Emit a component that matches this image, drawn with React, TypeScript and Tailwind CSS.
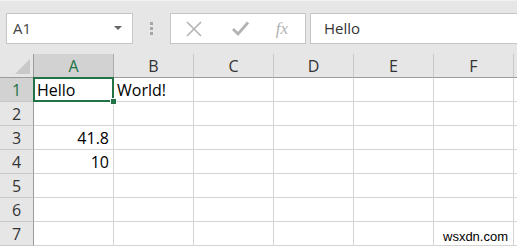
import React from 'react';

const cols = ['A', 'B', 'C', 'D', 'E', 'F', ''];
const rows = [1, 2, 3, 4, 5, 6, 7];

const cells: Record<string, { text: string; align?: 'left' | 'right' }> = {
  A1: { text: 'Hello' },
  B1: { text: 'World!' },
  A3: { text: '41.8', align: 'right' },
  A4: { text: '10', align: 'right' },
};

function Toolbar() {
  return (
    <div className="h-[54px] bg-[#e6e6e6] border-t border-[#f2f2f2] flex items-start pt-[12px] pl-[6px]">
      <div className="w-[127px] h-[31px] bg-white border border-[#c6c6c6] flex items-center justify-between pl-[6px] pr-[10px]">
        <span className="text-[15px] text-[#444]">A1</span>
        <svg width="8" height="5" viewBox="0 0 8 5">
          <path d="M0 0 L8 0 L4 4 Z" fill="#666" />
        </svg>
      </div>
      <div className="w-[37px] h-[31px] flex flex-col items-center justify-center gap-[2px]">
        <span className="w-[3px] h-[3px] bg-[#a6a6a6]" />
        <span className="w-[3px] h-[3px] bg-[#a6a6a6]" />
        <span className="w-[3px] h-[3px] bg-[#a6a6a6]" />
      </div>
      <div className="w-[136px] h-[31px] bg-white border border-[#c6c6c6] flex items-center">
        <div className="w-[46px] flex justify-center">
          <svg width="16" height="16" viewBox="0 0 16 16">
            <path d="M1 1 L15 15 M15 1 L1 15" stroke="#b3b3b3" strokeWidth="1.6" />
          </svg>
        </div>
        <div className="w-[46px] flex justify-center">
          <svg width="17" height="15" viewBox="0 0 17 15">
            <path d="M1 8 L6 13 L16 1.5" stroke="#b3b3b3" strokeWidth="2.8" fill="none" />
          </svg>
        </div>
        <div className="flex-1 flex justify-center pr-[4px]">
          <span className="text-[17px] italic text-[#b3b3b3] font-['Liberation_Serif',serif]">fx</span>
        </div>
      </div>
      <div className="flex-1 ml-[4px] h-[31px] bg-white border border-r-0 border-[#c6c6c6] flex items-center pl-[13px]">
        <span className="text-[15px] text-[#333]">Hello</span>
      </div>
    </div>
  );
}

function Grid() {
  return (
    <div className="grid grid-cols-[34px_repeat(6,80px)_1fr] grid-rows-[24px_repeat(7,24px)]">
      <div className="bg-[#e6e6e6] border-r border-b border-[#9b9b9b] relative overflow-hidden">
        <svg className="absolute right-[3px] bottom-[3px]" width="15" height="15" viewBox="0 0 15 15">
          <path d="M15 0 L15 15 L0 15 Z" fill="#c9c9c9" />
        </svg>
      </div>
      {cols.map((c, i) => (
        <div
          key={c + i}
          className={
            c === 'A'
              ? 'bg-[#d2d2d2] border-r border-b border-[#9b9b9b] border-r-[#ababab] flex items-center justify-center pt-[1px] text-[16px] text-[#217346]'
              : 'bg-[#e6e6e6] border-r border-b border-[#9b9b9b] border-r-[#c8c8c8] flex items-center justify-center pt-[1px] text-[16px] text-[#333]'
          }
        >
          {c}
        </div>
      ))}
      {rows.map((r) => (
        <React.Fragment key={r}>
          <div
            className={
              r === 1
                ? 'bg-[#d2d2d2] border-r border-b border-[#c8c8c8] border-r-[#9b9b9b] flex items-center justify-center pt-[1px] text-[16px] text-[#217346]'
                : 'bg-[#e6e6e6] border-r border-b border-[#c8c8c8] border-r-[#9b9b9b] flex items-center justify-center pt-[1px] text-[16px] text-[#333]'
            }
          >
            {r}
          </div>
          {cols.map((c, i) => {
            const id = c + r;
            const cell = c ? cells[id] : undefined;
            return (
              <div
                key={id + i}
                className={
                  cell?.align === 'right'
                    ? 'relative border-r border-b border-[#d4d4d4] flex items-center justify-end px-[4px] pt-[1px] text-[16px] text-black whitespace-nowrap'
                    : 'relative border-r border-b border-[#d4d4d4] flex items-center px-[3px] pt-[1px] text-[16px] text-black whitespace-nowrap'
                }
              >
                {cell?.text}
                {id === 'A1' && (
                  <>
                    <div className="absolute z-10 -left-px -top-px right-[-1px] bottom-[-1px] border-2 border-[#217346]" />
                    <div className="absolute z-10 right-[-4px] bottom-[-4px] w-[7px] h-[7px] bg-[#217346] border border-white" />
                  </>
                )}
              </div>
            );
          })}
        </React.Fragment>
      ))}
    </div>
  );
}

export default function App() {
  return (
    <div className="relative w-[517px] h-[247px] overflow-hidden bg-white font-['Open_Sans',sans-serif]">
      <Toolbar />
      <Grid />
      <span className="absolute left-[443px] top-[227px] text-[13px] text-black font-['Liberation_Sans',sans-serif]">
        wsxdn.com
      </span>
    </div>
  );
}
